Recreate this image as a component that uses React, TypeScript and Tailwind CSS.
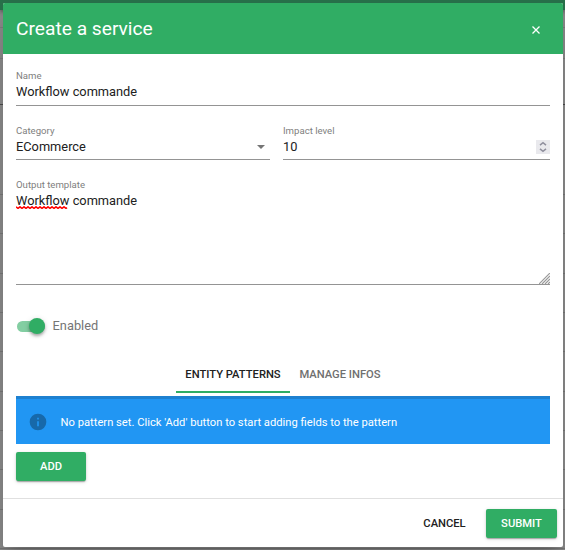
import type { ReactNode } from 'react';

const tableRows = Array.from({ length: 9 }, (_, i) => i);

function Backdrop() {
  return (
    <div className="flex h-[550px] w-full flex-col bg-[#8a8a8a]">
      <div className="h-[10px] shrink-0 bg-[#28704a] shadow-[0_2px_4px_rgba(0,0,0,0.4)]" />
      <div className="h-[18px] shrink-0 border-b border-[#7c7c7c]" />
      <div className="h-[31px] shrink-0 border-b border-[#7c7c7c]" />
      <div className="h-[46px] shrink-0 border-b border-[#4a4a4a]" />
      <div className="h-[90px] shrink-0 border-b border-[#777]" />
      {tableRows.map((row) => (
        <div key={row} className="h-[39.33px] shrink-0 border-b border-[#777]" />
      ))}
    </div>
  );
}

function Label({ children }: { children: ReactNode }) {
  return <div className="h-4 text-[9.6px] leading-4 text-[#808080]">{children}</div>;
}

function Value({ children }: { children: ReactNode }) {
  return <div className="h-4 text-[12.8px] leading-4 text-[#212121]">{children}</div>;
}

function InfoIcon() {
  return (
    <svg viewBox="0 0 24 24" className="ml-[12px] h-[20px] w-[20px] shrink-0 fill-[#1769aa]">
      <path d="M13 9h-2V7h2m0 10h-2v-6h2m-1-9A10 10 0 0 0 2 12a10 10 0 0 0 10 10 10 10 0 0 0 10-10A10 10 0 0 0 12 2Z" />
    </svg>
  );
}

function Spinner() {
  return (
    <div className="flex h-[14px] w-[14px] items-center justify-center bg-[#e9e9ed]">
      <svg viewBox="0 0 14 14" className="h-[14px] w-[14px] fill-none stroke-[#8f8f9d] stroke-[1.5]">
        <path d="M4 5.2 7 2.7 10 5.2M4 8.8 7 11.3 10 8.8" />
      </svg>
    </div>
  );
}

const buttonShadow = 'shadow-[0_2px_1px_-1px_rgba(0,0,0,0.2),0_1px_2px_rgba(0,0,0,0.14),0_1px_4px_rgba(0,0,0,0.12)]';

export default function App() {
  return (
    <div className="relative h-[550px] w-[565px] overflow-hidden font-['Roboto',sans-serif]">
      <Backdrop />
      <div className="absolute top-[3px] left-[3px] flex h-[544px] w-[560px] flex-col rounded-[2px] bg-white shadow-[0_9px_12px_-6px_rgba(0,0,0,0.2),0_19px_30px_2px_rgba(0,0,0,0.1)]">
        <header className="flex h-[51px] shrink-0 items-center justify-between rounded-t-[2px] bg-[#30ad64] pr-[23px] pl-[13px] text-white">
          <h1 className="pt-px text-[19.2px] leading-[26px] font-normal">Create a service</h1>
          <svg viewBox="0 0 8 8" className="mt-[2px] h-[8px] w-[8px] stroke-white stroke-[1.3]">
            <path d="M.5.5l7 7M7.5.5l-7 7" />
          </svg>
        </header>

        <main className="flex h-[444px] shrink-0 flex-col px-[13px] pt-[14px]">
          <div className="h-[38px] border-b border-[#949494]">
            <Label>Name</Label>
            <Value>Workflow commande</Value>
          </div>
          <div className="mt-[17px] flex gap-[13px]">
            <div className="h-[37px] w-[254px] border-b border-[#949494]">
              <Label>Category</Label>
              <div className="flex items-center justify-between">
                <Value>ECommerce</Value>
                <svg viewBox="0 0 8 4" className="mr-[5px] h-[4px] w-[8px] fill-[#757575]">
                  <path d="M0 0h8L4 4z" />
                </svg>
              </div>
            </div>
            <div className="h-[37px] flex-1 border-b border-[#949494]">
              <Label>Impact level</Label>
              <div className="flex items-center justify-between">
                <Value>10</Value>
                <Spinner />
              </div>
            </div>
          </div>
          <div className="mt-[17px] flex h-[108px] flex-col justify-between border-b border-[#949494]">
            <div>
              <Label>Output template</Label>
              <div className="relative">
                <Value>Workflow commande</Value>
                <svg viewBox="0 0 53 3" className="absolute top-[13px] left-0 h-[3px] w-[53px] fill-none stroke-[#f00] stroke-[1.5]">
                  <path d="M0 .8l2 1.6 2-1.6 2 1.6 2-1.6 2 1.6 2-1.6 2 1.6 2-1.6 2 1.6 2-1.6 2 1.6 2-1.6 2 1.6 2-1.6 2 1.6 2-1.6 2 1.6 2-1.6 2 1.6 2-1.6 2 1.6 2-1.6 2 1.6 2-1.6 2 1.6 1-.8" />
                </svg>
              </div>
            </div>
            <svg viewBox="0 0 11 11" className="h-[11px] w-[11px] self-end stroke-[#999] stroke-[1.2]">
              <path d="M0 11 11 0M3 11l8-8M6 11l5-5M9 11l2-2" />
            </svg>
          </div>

          <div className="mt-[32px] flex h-[18px] items-center">
            <div className="ml-px flex h-[11px] w-[28px] items-center justify-end rounded-full bg-[#83cea2]">
              <div className="h-[16px] w-[16px] shrink-0 rounded-full bg-[#30ad64] shadow-[0_2px_3px_rgba(0,0,0,0.3),0_1px_6px_rgba(0,0,0,0.12)]" />
            </div>
            <span className="ml-[7.6px] text-[12.8px] leading-4 text-[#757575]">Enabled</span>
          </div>

          <nav className="mt-[20px] flex h-[38px] justify-center text-[11.2px] font-medium">
            <div className="flex w-[114px] items-center justify-center border-b-2 border-[#30ad64] pt-[5px] text-[#212121]">ENTITY PATTERNS</div>
            <div className="flex w-[100px] items-center justify-center border-b-2 border-transparent pt-[5px] text-[#6f6f6f]">MANAGE INFOS</div>
          </nav>

          <div className="mt-[3px] flex h-[48px] shrink-0 items-center border-t-[3px] border-[#1e81d0] bg-[#2196f3] text-white">
            <InfoIcon />
            <span className="ml-[12.6px] pt-[2px] text-[11.2px] leading-4">No pattern set. Click 'Add' button to start adding fields to the pattern</span>
          </div>

          <button className={`mt-[8px] h-[29px] w-[70px] shrink-0 rounded-[2px] bg-[#30ad64] pt-[2px] text-[11.2px] font-medium text-white ${buttonShadow}`}>ADD</button>
        </main>

        <footer className="flex h-[49px] items-center justify-end border-t border-[#e0e0e0] pr-[6px]">
          <button className="h-[29px] w-[83px] pt-[3px] text-[11.2px] font-medium text-[#212121]">CANCEL</button>
          <button className={`h-[29px] w-[71px] rounded-[2px] bg-[#30ad64] pt-[3px] text-[11.2px] font-medium text-white ${buttonShadow}`}>SUBMIT</button>
        </footer>
      </div>
    </div>
  );
}
